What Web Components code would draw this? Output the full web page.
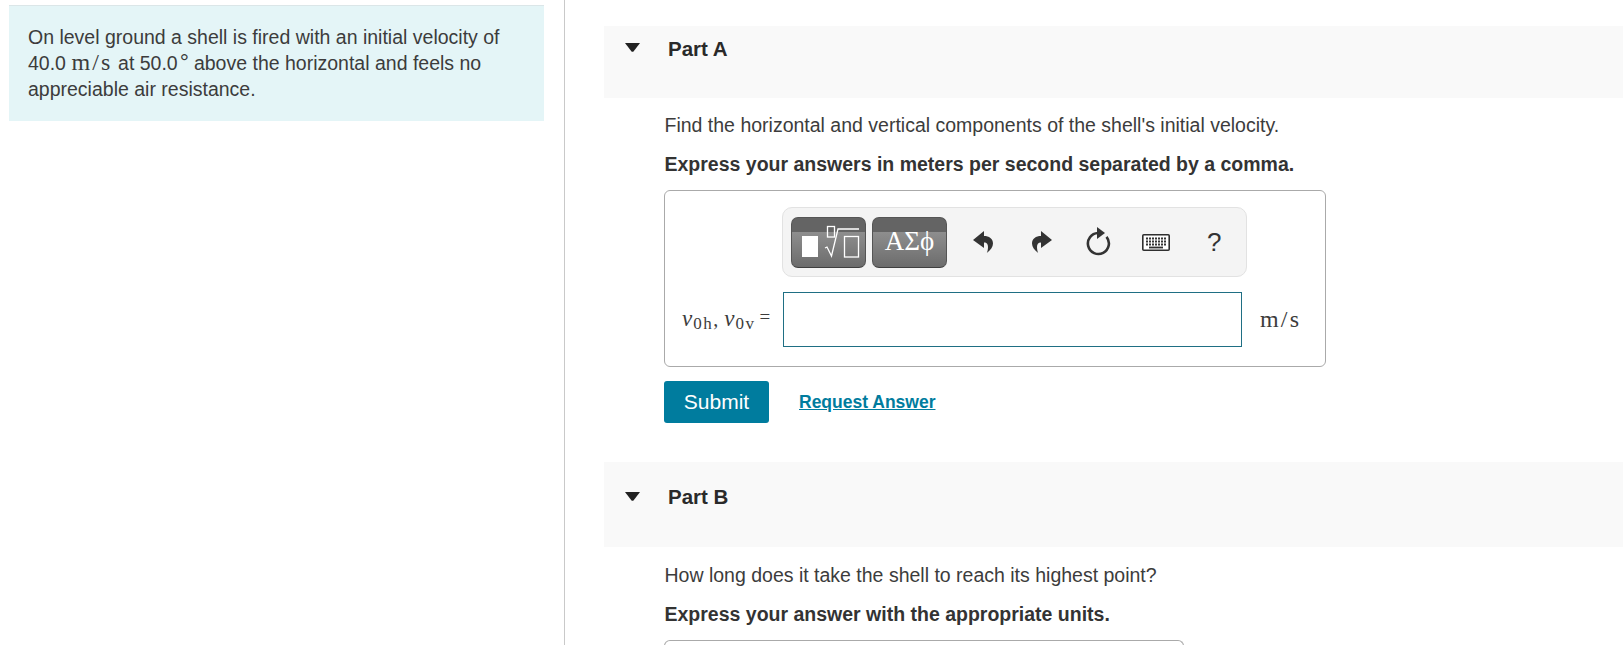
<!DOCTYPE html>
<html lang="en"><head><meta charset="utf-8"><title>Part A</title>
<style>
html,body{margin:0;padding:0;background:#fff;height:645px;overflow:hidden}
body{font-family:"Liberation Sans",Arial,sans-serif;color:#333;font-size:19.5px}
</style></head><body>
<app-layout>
  <intro-panel slot="left"><span>On level ground a shell is fired with an initial velocity of</span><br><span>40.0</span> <unit-text>m/s</unit-text> <span>at 50.0</span><deg-mark>°</deg-mark><span>above the horizontal and feels no</span><br><span>appreciable air resistance.</span></intro-panel>
  <part-section title-text="Part A" style="--head:72px;--title-top:10px;--tri-top:17px;--pad:14px">
    <span slot="prompt">Find the horizontal and vertical components of the shell's initial velocity.</span>
    <span slot="instruction">Express your answers in meters per second separated by a comma.</span>
    <answer-box></answer-box>
    <action-row></action-row>
  </part-section>
  <part-section title-text="Part B" style="--head:85px;--title-top:22px;--tri-top:30px;--pad:15px;margin-top:39px">
    <span slot="prompt">How long does it take the shell to reach its highest point?</span>
    <span slot="instruction">Express your answer with the appropriate units.</span>
    <div style="width:520px;height:40px;box-sizing:border-box;border:1px solid #aaa;border-bottom:0;border-radius:6px 6px 0 0"></div>
  </part-section>
</app-layout>
<script>
function def(name, html){
  customElements.define(name, class extends HTMLElement{
    constructor(){super();const r=this.attachShadow({mode:'open'});r.innerHTML=html;}
    connectedCallback(){
      const t=this.shadowRoot.querySelector('[data-title]');
      if(t)t.textContent=this.getAttribute('title-text');
    }
  });
}
def('app-layout',`<style>
:host{display:grid;grid-template-columns:565px 1fr;height:645px;overflow:hidden}
.l{border-right:1px solid #c9c9c9;padding:5px 20px 0 9px;height:640px}
.r{padding:26px 0 0 39px;min-width:0}
</style><div class="l"><slot name="left"></slot></div><div class="r"><slot></slot></div>`);
def('intro-panel',`<style>
:host{display:block;background:#e4f5f7;border-top:1px solid #dbe6e8;padding:19px 10px 17px 19px;line-height:25.800px;height:116px;box-sizing:border-box;color:#3c3c3c;white-space:nowrap}
</style><slot></slot>`);
def('unit-text',`<style>:host{font-family:"Liberation Serif",serif;font-size:24px;letter-spacing:2.200px;line-height:0}</style><slot></slot>`);
def('deg-mark',`<style>:host{font-size:23px;line-height:0;margin:0 5px 0 2px}</style><slot></slot>`);
def('part-section',`<style>
:host{display:block}
.h{background:#f9f9f9;display:flex;align-items:flex-start;padding:0 0 0 21px;box-sizing:border-box;height:var(--head)}
svg{margin-top:var(--tri-top);flex:none}
.t{font-weight:700;color:#2a2a2a;margin:var(--title-top) 0 0 28px;line-height:26px;font-size:20.500px}
.b{padding:var(--pad) 0 0 60.500px}
.p{line-height:26px;color:#3c3c3c}
.i{font-weight:700;line-height:26px;margin-top:13px;color:#333}
.c{margin:13px 0 0 -.5px}
</style><div class="h"><svg width="15" height="9" viewBox="0 0 15 9"><path d="M0 0h15L8.500 8.500Q7.500 9 6.500 8.500z" fill="#222"/></svg><div class="t" data-title></div></div>
<div class="b"><div class="p"><slot name="prompt"></slot></div><div class="i"><slot name="instruction"></slot></div><div class="c"><slot></slot></div></div>`);
def('answer-box',`<style>
:host{display:block;width:662px;height:177px;box-sizing:border-box;border:1px solid #aaa;border-radius:6px;padding:16px 0 0 117px;font-family:"Liberation Serif",serif;color:#3c3c3c}
.row{display:flex;align-items:center;margin:14px 0 0 -100px}
.lab{width:101px;flex:none;font-size:20px;white-space:nowrap;line-height:55px}
i{font-size:23px}
sub{font-size:17px;line-height:0;vertical-align:-3px;margin-left:1px;letter-spacing:1.500px}
.eq{font-size:19px;margin-left:4px;position:relative;top:-3px}
.com{margin-right:1px}
.inp{width:459px;height:55px;box-sizing:border-box;border:1px solid #1f6f84;background:#fff;flex:none}
.u{margin-left:18px;font-size:24px;letter-spacing:2.200px}
</style><math-toolbar></math-toolbar>
<div class="row"><div class="lab"><i>v</i><sub>0h</sub><span class="com">,</span> <i>v</i><sub>0v</sub><span class="eq">=</span></div><div class="inp"></div><div class="u">m/s</div></div>`);
def('math-toolbar',`<style>
:host{display:flex;align-items:center;width:465px;height:70px;box-sizing:border-box;border:1px solid #e2e2e2;border-radius:10px;background:#f4f4f4;padding-left:8px}
.b{width:75px;height:51px;box-sizing:border-box;border:1px solid #555;border-bottom-color:#3f3f3f;border-radius:7px;margin-right:6px;background:linear-gradient(#646464 0 14px,#8e8e8e 14px,#6c6c6c);color:#fff;font-family:"Liberation Serif",serif;font-size:27px;flex:none;text-align:center;line-height:46px}
svg{display:block;flex:none}
.q{font-family:"Liberation Sans",sans-serif;font-size:26px;color:#333;line-height:1}
</style>
<div class="b"><svg width="73" height="49" viewBox="0 0 73 49" fill="none" stroke="#fff" stroke-width="1.300"><rect x="10" y="18" width="16" height="21" fill="#fff" stroke="none"/><rect x="35.500" y="8.500" width="7" height="10.500"/><path d="M33 30l2-1 4.500 9 6.500-27h21"/><rect x="52.500" y="18.500" width="14" height="20.500"/></svg></div>
<div class="b">ΑΣϕ</div>
<svg style="margin-left:20px" width="20" height="25" viewBox="0 0 20 25"><path fill="#333" d="M11 1 0 10l11 8v-5.500c3 0 4 2 4 4.500 0 2.500-.6 5-1.200 6C17.500 20 20 17 20 13.500 20 8.500 16 6 11 6z"/></svg>
<svg style="margin-left:39px" width="20" height="25" viewBox="0 0 20 25"><path fill="#333" d="M9 1l11 9-11 8v-5.500c-3 0-4 2-4 4.500 0 2.500.6 5 1.200 6C2.500 20 0 17 0 13.500 0 8.500 4 6 9 6z"/></svg>
<svg style="margin-left:33px" width="27" height="30" viewBox="0 0 27 30" fill="none"><path d="M21.500 9.800A10.500 10.500 0 1 1 13 6" stroke="#333" stroke-width="2.600"/><path d="M12 0l8 6-8 6z" fill="#333"/></svg>
<svg style="margin-left:30px" width="28" height="17" viewBox="0 0 28 17"><rect x=".8" y=".8" width="26.400" height="15.400" rx="1" fill="#fff" stroke="#2f2f2f" stroke-width="1.600"/><path d="M4 4.500h20M4 7.500h20M4 10.500h20" stroke="#333" stroke-width="1.800" stroke-dasharray="2 1"/><path d="M7 13.500h14" stroke="#2f2f2f" stroke-width="1.800"/></svg>
<span class="q" style="margin-left:37px">?</span>`);
def('action-row',`<style>
:host{display:flex;align-items:center;margin-top:14px}
.s{width:105px;height:42px;background:#007c9e;color:#fff;border-radius:3px;display:flex;align-items:center;justify-content:center;font-size:21px}
a{margin-left:30px;color:#007c9e;font-weight:700;font-size:17.500px;text-decoration:underline}
</style><div class="s">Submit</div><a>Request Answer</a>`);
</script>
</body></html>
